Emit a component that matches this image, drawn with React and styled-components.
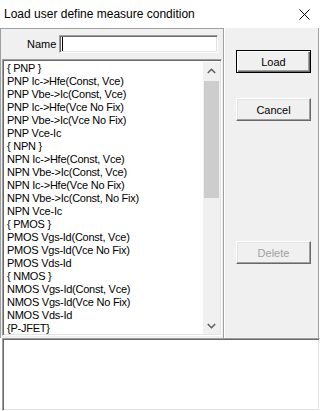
import React from 'react'
import styled, { createGlobalStyle, css } from 'styled-components'

const Global = createGlobalStyle`
  html, body { margin: 0; padding: 0; background: #fff; }
  body { font-family: "Liberation Sans", Arial, sans-serif; }
`

const items = [
  '{ PNP }',
  'PNP Ic->Hfe(Const, Vce)',
  'PNP Vbe->Ic(Const, Vce)',
  'PNP Ic->Hfe(Vce No Fix)',
  'PNP Vbe->Ic(Vce No Fix)',
  'PNP Vce-Ic',
  '{ NPN }',
  'NPN Ic->Hfe(Const, Vce)',
  'NPN Vbe->Ic(Const, Vce)',
  'NPN Ic->Hfe(Vce No Fix)',
  'NPN Vbe->Ic(Const, No Fix)',
  'NPN Vce-Ic',
  '{ PMOS }',
  'PMOS Vgs-Id(Const, Vce)',
  'PMOS Vgs-Id(Vce No Fix)',
  'PMOS Vds-Id',
  '{ NMOS }',
  'NMOS Vgs-Id(Const, Vce)',
  'NMOS Vgs-Id(Vce No Fix)',
  'NMOS Vds-Id',
  '{P-JFET}',
]

const sunken = css`
  border-top: 1px solid #a0a0a0;
  border-left: 1px solid #a0a0a0;
  border-bottom: 1px solid #ffffff;
  border-right: 1px solid #ffffff;
  box-shadow: inset 1px 1px 0 #696969, inset -1px -1px 0 #e3e3e3;
`

export default function App() {
  return (
    <Window>
      <Global />
      <TitleBar>
        <Title>Load user define measure condition</Title>
        <CloseIcon width="11" height="11" viewBox="0 0 11 11">
          <path d="M0.5 0.5 L10.5 10.5 M10.5 0.5 L0.5 10.5" stroke="#000" strokeWidth="1" fill="none" />
        </CloseIcon>
      </TitleBar>
      <Body>
        <LeftPanel>
          <NameRow>
            <Label>Name</Label>
            <NameInput>
              <Caret />
            </NameInput>
          </NameRow>
          <ListBox>
            <ListItems>
              {items.map((t) => (
                <Item key={t}>{t}</Item>
              ))}
            </ListItems>
            <ScrollBar>
              <Arrow>
                <svg width="9" height="6" viewBox="0 0 9 6">
                  <path d="M0.8 5 L4.5 1.3 L8.2 5" stroke="#606060" strokeWidth="1.6" fill="none" />
                </svg>
              </Arrow>
              <Track>
                <Thumb />
              </Track>
              <Arrow>
                <svg width="9" height="6" viewBox="0 0 9 6">
                  <path d="M0.8 1 L4.5 4.7 L8.2 1" stroke="#606060" strokeWidth="1.6" fill="none" />
                </svg>
              </Arrow>
            </ScrollBar>
          </ListBox>
        </LeftPanel>
        <RightPanel>
          <Button $default>Load</Button>
          <Button $gap={25}>Cancel</Button>
          <Button $gap={120} $disabled>Delete</Button>
        </RightPanel>
      </Body>
      <Output />
    </Window>
  )
}

const Window = styled.div`
  width: 321px;
  height: 411px;
  display: flex;
  flex-direction: column;
  background: #fff;
  overflow: hidden;
`

const TitleBar = styled.div`
  height: 28px;
  display: flex;
  align-items: center;
  justify-content: space-between;
  padding: 0 11px 0 4px;
  background: #fff;
`

const Title = styled.span`
  font-size: 12px;
  color: #000;
  margin-top: -1px;
`

const CloseIcon = styled.svg`
  display: block;
`

const Body = styled.div`
  height: 310px;
  display: flex;
  background: #f0f0f0;
  width: 319px;
`

const LeftPanel = styled.div`
  width: 222px;
  display: flex;
  flex-direction: column;
  border-top: 1px solid #a0a0a0;
  border-left: 1px solid #a0a0a0;
  border-right: 1px solid #a0a0a0;
  box-shadow: 1px 0 0 #fff;
`

const NameRow = styled.div`
  height: 30px;
  display: flex;
  align-items: center;
  padding-left: 26px;
  gap: 3px;
`

const Label = styled.span`
  font-size: 11px;
  color: #000;
`

const NameInput = styled.div`
  width: 153px;
  height: 14px;
  background: #fff;
  ${sunken};
  padding: 1px 2px;
  display: flex;
  align-items: center;
`

const Caret = styled.span`
  width: 1px;
  height: 14px;
  background: #000;
`

const ListBox = styled.div`
  flex: 1;
  margin: 0 0 2px 1px;
  width: 220px;
  box-sizing: border-box;
  display: flex;
  background: #fff;
  ${sunken};
  padding: 2px 1px 1px 2px;
  min-height: 0;
`

const ListItems = styled.div`
  flex: 1;
  overflow: hidden;
  padding-left: 2px;
`

const Item = styled.div`
  height: 13px;
  line-height: 13px;
  font-size: 11px;
  letter-spacing: -0.25px;
  color: #000;
  white-space: nowrap;
`

const ScrollBar = styled.div`
  width: 17px;
  display: flex;
  flex-direction: column;
  background: #f0f0f0;
`

const Arrow = styled.div`
  height: 17px;
  display: flex;
  align-items: center;
  justify-content: center;
`

const Track = styled.div`
  flex: 1;
  padding-top: 2px;
`

const Thumb = styled.div`
  height: 117px;
  margin: 0 1px;
  background: #cdcdcd;
`

const RightPanel = styled.div`
  flex: 1;
  display: flex;
  flex-direction: column;
  align-items: flex-start;
  padding: 22px 0 0 12px;
  border-right: 1px solid #a0a0a0;
`

const Button = styled.div`
  width: 75px;
  height: 23px;
  box-sizing: border-box;
  margin-top: ${(p) => (p.$gap ? `${p.$gap}px` : '0')};
  display: flex;
  align-items: center;
  justify-content: center;
  font-size: 11px;
  color: ${(p) => (p.$disabled ? '#a0a0a0' : '#000')};
  background: #f0f0f0;
  ${(p) =>
    p.$default
      ? css`
          border: 1px solid #000;
          box-shadow: inset 1px 1px 0 #fff, inset -1px -1px 0 #696969, inset -2px -2px 0 #a0a0a0;
        `
      : css`
          border-top: 1px solid #fff;
          border-left: 1px solid #fff;
          border-bottom: 1px solid #696969;
          border-right: 1px solid #696969;
          box-shadow: inset -1px -1px 0 #a0a0a0, inset 1px 1px 0 #e3e3e3;
        `}
`

const Output = styled.div`
  flex: 1;
  margin: 0 1px 0 2px;
  background: #fff;
  ${sunken};
`
